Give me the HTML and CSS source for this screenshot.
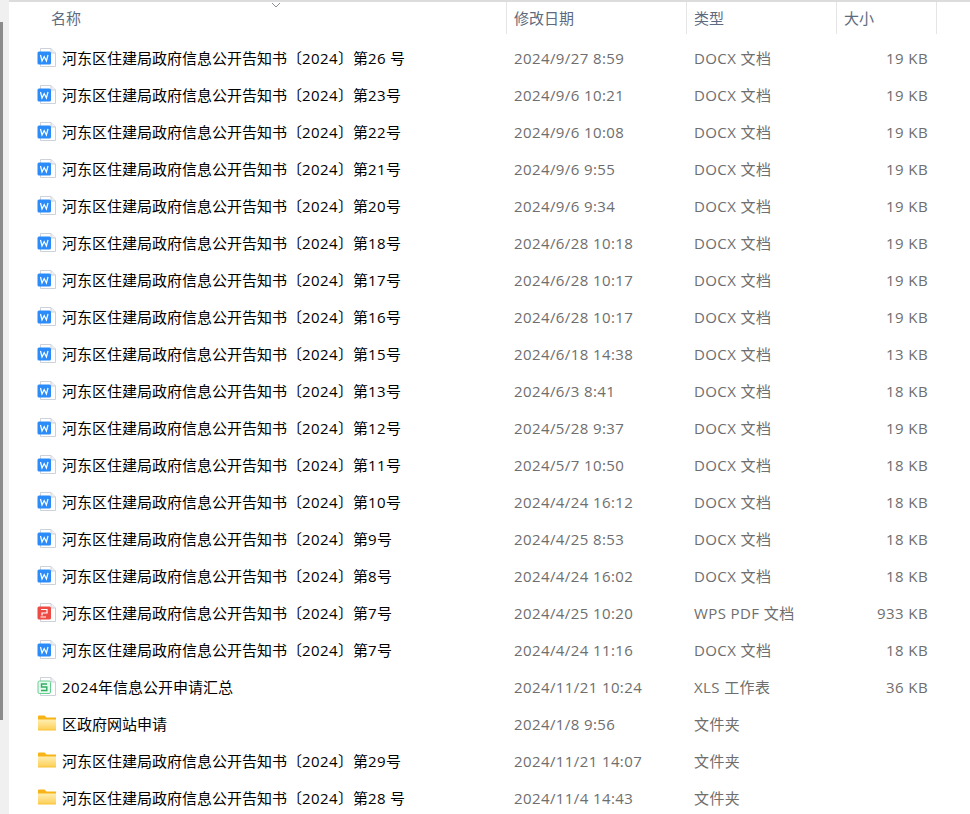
FILE: index.html
```html
<!DOCTYPE html>
<html lang="zh-CN">
<head>
    <meta charset="UTF-8">
    <title>文件列表</title>
    <link rel="stylesheet" href="styles.css">
</head>
<body>
<svg class="defs" width="0" height="0">
    <defs>
        <linearGradient id="folderFill" x1="0" y1="0" x2="0" y2="1">
            <stop offset="0" stop-color="#ffeeb0"/>
            <stop offset="0.8" stop-color="#fdd466"/>
            <stop offset="1" stop-color="#f9c233"/>
        </linearGradient>
        <symbol id="sheet" viewBox="0 0 20 20">
            <path d="M4.500 .5H15L19.500 5V18.500H4.500Z" fill="#fff" stroke="#cdd1d8"/>
            <path d="M15 .5V5H19.500" fill="#eef0f3" stroke="#cdd1d8"/>
        </symbol>
        <symbol id="word" viewBox="0 0 20 20">
            <use href="#sheet"/>
            <rect x="1.500" y="3.500" width="13.500" height="13" rx="1.500" fill="#2b8bf8"/>
            <path d="M4.500 7 6 13 8.200 8.500 10.400 13 12 7" fill="none" stroke="#fff" stroke-width="1.200"/>
        </symbol>
        <symbol id="pdf" viewBox="0 0 20 20">
            <use href="#sheet"/>
            <rect x="1.500" y="3.500" width="13.500" height="13" rx="1.500" fill="#ee4b45"/>
            <path d="M5 6.500H11V10H6V12.500M4.500 14H10" fill="none" stroke="#fff" stroke-width="1.200"/>
        </symbol>
        <symbol id="sheet-xls" viewBox="0 0 20 20">
            <use href="#sheet"/>
            <rect x="2" y="4" width="12.500" height="12.500" rx="1.500" fill="#e8f9ee" stroke="#62d08f"/>
            <path d="M11 7H5.500V10H10.800V13.500H5" fill="none" stroke="#2fae66" stroke-width="1.400"/>
        </symbol>
        <symbol id="folder" viewBox="0 0 20 20">
            <path d="M2 2.500Q2 1.500 3 1.500H8.500L10.500 3.500H20V6H2Z" fill="#f6b417"/>
            <path d="M2 5.500H19.500Q20 5.500 20 6V16Q20 16.500 19.500 16.500H2.500Q2 16.500 2 16Z" fill="url(#folderFill)"/>
        </symbol>
    </defs>
</svg>

<div class="scroll-thumb"></div>

<div class="explorer">
    <div class="header">
        <div class="col-name head-cell">名称
            <svg class="sort-caret" width="10" height="6" viewBox="0 0 10 6"><path d="M1 1 5 5 9 1" fill="none" stroke="#8a8f96"/></svg>
        </div>
        <div class="col-date head-cell">修改日期</div>
        <div class="col-type head-cell">类型</div>
        <div class="col-size head-cell">大小</div>
    </div>

    <div class="rows">
        <div class="row">
            <div class="col-name name-cell"><svg class="icon"><use href="#word"/></svg><span>河东区住建局政府信息公开告知书〔<span class="num">2024</span>〕第<span class="num">26</span> 号</span></div>
            <div class="col-date">2024/9/27 8:59</div>
            <div class="col-type">DOCX 文档</div>
            <div class="col-size size-cell">19 KB</div>
        </div>
        <div class="row">
            <div class="col-name name-cell"><svg class="icon"><use href="#word"/></svg><span>河东区住建局政府信息公开告知书〔<span class="num">2024</span>〕第<span class="num">23</span>号</span></div>
            <div class="col-date">2024/9/6 10:21</div>
            <div class="col-type">DOCX 文档</div>
            <div class="col-size size-cell">19 KB</div>
        </div>
        <div class="row">
            <div class="col-name name-cell"><svg class="icon"><use href="#word"/></svg><span>河东区住建局政府信息公开告知书〔<span class="num">2024</span>〕第<span class="num">22</span>号</span></div>
            <div class="col-date">2024/9/6 10:08</div>
            <div class="col-type">DOCX 文档</div>
            <div class="col-size size-cell">19 KB</div>
        </div>
        <div class="row">
            <div class="col-name name-cell"><svg class="icon"><use href="#word"/></svg><span>河东区住建局政府信息公开告知书〔<span class="num">2024</span>〕第<span class="num">21</span>号</span></div>
            <div class="col-date">2024/9/6 9:55</div>
            <div class="col-type">DOCX 文档</div>
            <div class="col-size size-cell">19 KB</div>
        </div>
        <div class="row">
            <div class="col-name name-cell"><svg class="icon"><use href="#word"/></svg><span>河东区住建局政府信息公开告知书〔<span class="num">2024</span>〕第<span class="num">20</span>号</span></div>
            <div class="col-date">2024/9/6 9:34</div>
            <div class="col-type">DOCX 文档</div>
            <div class="col-size size-cell">19 KB</div>
        </div>
        <div class="row">
            <div class="col-name name-cell"><svg class="icon"><use href="#word"/></svg><span>河东区住建局政府信息公开告知书〔<span class="num">2024</span>〕第<span class="num">18</span>号</span></div>
            <div class="col-date">2024/6/28 10:18</div>
            <div class="col-type">DOCX 文档</div>
            <div class="col-size size-cell">19 KB</div>
        </div>
        <div class="row">
            <div class="col-name name-cell"><svg class="icon"><use href="#word"/></svg><span>河东区住建局政府信息公开告知书〔<span class="num">2024</span>〕第<span class="num">17</span>号</span></div>
            <div class="col-date">2024/6/28 10:17</div>
            <div class="col-type">DOCX 文档</div>
            <div class="col-size size-cell">19 KB</div>
        </div>
        <div class="row">
            <div class="col-name name-cell"><svg class="icon"><use href="#word"/></svg><span>河东区住建局政府信息公开告知书〔<span class="num">2024</span>〕第<span class="num">16</span>号</span></div>
            <div class="col-date">2024/6/28 10:17</div>
            <div class="col-type">DOCX 文档</div>
            <div class="col-size size-cell">19 KB</div>
        </div>
        <div class="row">
            <div class="col-name name-cell"><svg class="icon"><use href="#word"/></svg><span>河东区住建局政府信息公开告知书〔<span class="num">2024</span>〕第<span class="num">15</span>号</span></div>
            <div class="col-date">2024/6/18 14:38</div>
            <div class="col-type">DOCX 文档</div>
            <div class="col-size size-cell">13 KB</div>
        </div>
        <div class="row">
            <div class="col-name name-cell"><svg class="icon"><use href="#word"/></svg><span>河东区住建局政府信息公开告知书〔<span class="num">2024</span>〕第<span class="num">13</span>号</span></div>
            <div class="col-date">2024/6/3 8:41</div>
            <div class="col-type">DOCX 文档</div>
            <div class="col-size size-cell">18 KB</div>
        </div>
        <div class="row">
            <div class="col-name name-cell"><svg class="icon"><use href="#word"/></svg><span>河东区住建局政府信息公开告知书〔<span class="num">2024</span>〕第<span class="num">12</span>号</span></div>
            <div class="col-date">2024/5/28 9:37</div>
            <div class="col-type">DOCX 文档</div>
            <div class="col-size size-cell">19 KB</div>
        </div>
        <div class="row">
            <div class="col-name name-cell"><svg class="icon"><use href="#word"/></svg><span>河东区住建局政府信息公开告知书〔<span class="num">2024</span>〕第<span class="num">11</span>号</span></div>
            <div class="col-date">2024/5/7 10:50</div>
            <div class="col-type">DOCX 文档</div>
            <div class="col-size size-cell">18 KB</div>
        </div>
        <div class="row">
            <div class="col-name name-cell"><svg class="icon"><use href="#word"/></svg><span>河东区住建局政府信息公开告知书〔<span class="num">2024</span>〕第<span class="num">10</span>号</span></div>
            <div class="col-date">2024/4/24 16:12</div>
            <div class="col-type">DOCX 文档</div>
            <div class="col-size size-cell">18 KB</div>
        </div>
        <div class="row">
            <div class="col-name name-cell"><svg class="icon"><use href="#word"/></svg><span>河东区住建局政府信息公开告知书〔<span class="num">2024</span>〕第<span class="num">9</span>号</span></div>
            <div class="col-date">2024/4/25 8:53</div>
            <div class="col-type">DOCX 文档</div>
            <div class="col-size size-cell">18 KB</div>
        </div>
        <div class="row">
            <div class="col-name name-cell"><svg class="icon"><use href="#word"/></svg><span>河东区住建局政府信息公开告知书〔<span class="num">2024</span>〕第<span class="num">8</span>号</span></div>
            <div class="col-date">2024/4/24 16:02</div>
            <div class="col-type">DOCX 文档</div>
            <div class="col-size size-cell">18 KB</div>
        </div>
        <div class="row">
            <div class="col-name name-cell"><svg class="icon"><use href="#pdf"/></svg><span>河东区住建局政府信息公开告知书〔<span class="num">2024</span>〕第<span class="num">7</span>号</span></div>
            <div class="col-date">2024/4/25 10:20</div>
            <div class="col-type">WPS PDF 文档</div>
            <div class="col-size size-cell">933 KB</div>
        </div>
        <div class="row">
            <div class="col-name name-cell"><svg class="icon"><use href="#word"/></svg><span>河东区住建局政府信息公开告知书〔<span class="num">2024</span>〕第<span class="num">7</span>号</span></div>
            <div class="col-date">2024/4/24 11:16</div>
            <div class="col-type">DOCX 文档</div>
            <div class="col-size size-cell">18 KB</div>
        </div>
        <div class="row">
            <div class="col-name name-cell"><svg class="icon"><use href="#sheet-xls"/></svg><span><span class="num">2024</span>年信息公开申请汇总</span></div>
            <div class="col-date">2024/11/21 10:24</div>
            <div class="col-type">XLS 工作表</div>
            <div class="col-size size-cell">36 KB</div>
        </div>
        <div class="row">
            <div class="col-name name-cell"><svg class="icon"><use href="#folder"/></svg><span>区政府网站申请</span></div>
            <div class="col-date">2024/1/8 9:56</div>
            <div class="col-type">文件夹</div>
            <div class="col-size size-cell"></div>
        </div>
        <div class="row">
            <div class="col-name name-cell"><svg class="icon"><use href="#folder"/></svg><span>河东区住建局政府信息公开告知书〔<span class="num">2024</span>〕第<span class="num">29</span>号</span></div>
            <div class="col-date">2024/11/21 14:07</div>
            <div class="col-type">文件夹</div>
            <div class="col-size size-cell"></div>
        </div>
        <div class="row">
            <div class="col-name name-cell"><svg class="icon"><use href="#folder"/></svg><span>河东区住建局政府信息公开告知书〔<span class="num">2024</span>〕第<span class="num">28</span> 号</span></div>
            <div class="col-date">2024/11/4 14:43</div>
            <div class="col-type">文件夹</div>
            <div class="col-size size-cell"></div>
        </div>
    </div>
</div>
</body>
</html>
```

FILE: styles.css
```css
html, body {
    height: 100%;
}

body {
    margin: 0;
    overflow: hidden;
    background: #f0f0f0;
    font-family: "Open Sans", "Noto Sans CJK SC", sans-serif;
    font-size: 15px;
    letter-spacing: 0.4px;
    color: #6e6e6e;
}

.defs {
    display: block;
    height: 0;
}

.scroll-thumb {
    position: absolute;
    left: 0;
    top: 22px;
    width: 3px;
    height: 698px;
    background: #8c8c8c;
}

.explorer {
    height: 814px;
    overflow: hidden;
    margin-left: 9px;
    padding-left: 1px;
    border-top: 2px solid #dcdcdc;
    box-sizing: border-box;
    background: #fff;
}

.header {
    display: flex;
    height: 32px;
    margin-bottom: 5px;
    letter-spacing: 0;
    color: #5c6b80;
}

.head-cell {
    position: relative;
    border-right: 1px solid #e5e5e5;
    box-sizing: border-box;
    line-height: 32px;
}

.col-name {
    width: 497px;
    flex: none;
}

.col-date {
    width: 180px;
    flex: none;
    padding-left: 7px;
    box-sizing: border-box;
}

.col-type {
    width: 150px;
    flex: none;
    padding-left: 7px;
    box-sizing: border-box;
}

.col-size {
    width: 100px;
    flex: none;
    padding-left: 7px;
    box-sizing: border-box;
}

.header .col-name {
    padding-left: 41px;
}

.sort-caret {
    position: absolute;
    left: 261px;
    top: 0;
}

.row {
    display: flex;
    height: 37px;
    align-items: center;
}

.name-cell {
    display: flex;
    align-items: center;
    padding-left: 26px;
    box-sizing: border-box;
    letter-spacing: 0;
    color: #000;
}

.num {
    letter-spacing: 0.42px;
}

.icon {
    width: 20px;
    height: 20px;
    flex: none;
    margin-right: 6px;
}

.size-cell {
    padding-right: 9px;
    text-align: right;
}
```
